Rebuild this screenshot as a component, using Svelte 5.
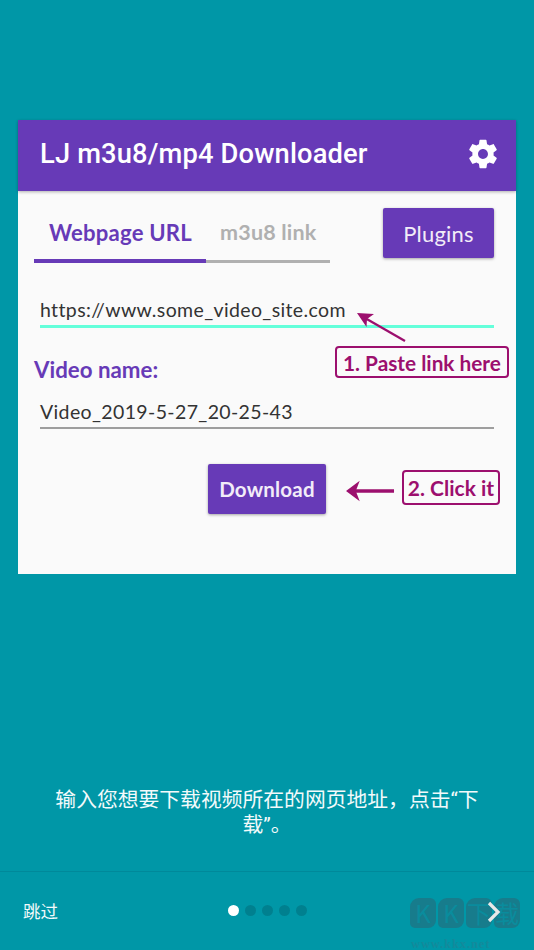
<script>
  const dots = [0, 1, 2, 3, 4];
</script>

<div class="page">
  <div class="shot">
    <header class="bar">
      <h1>LJ m3u8/mp4 Downloader</h1>
      <svg class="gear" viewBox="0 0 24 24" aria-hidden="true"><path d="M19.43 12.98c.04-.32.07-.64.07-.98s-.03-.66-.07-.98l2.11-1.65c.19-.15.24-.42.12-.64l-2-3.46c-.12-.22-.39-.3-.61-.22l-2.49 1c-.52-.4-1.08-.73-1.69-.98l-.38-2.65C14.46 2.18 14.25 2 14 2h-4c-.25 0-.46.18-.49.42l-.38 2.65c-.61.25-1.17.59-1.69.98l-2.49-1c-.23-.09-.49 0-.61.22l-2 3.46c-.13.22-.07.49.12.64l2.11 1.65c-.04.32-.07.65-.07.98s.03.66.07.98l-2.11 1.65c-.19.15-.24.42-.12.64l2 3.46c.12.22.39.3.61.22l2.49-1c.52.4 1.08.73 1.69.98l.38 2.65c.03.24.24.42.49.42h4c.25 0 .46-.18.49-.42l.38-2.65c.61-.25 1.17-.59 1.69-.98l2.49 1c.23.09.49 0 .61-.22l2-3.46c.12-.22.07-.49-.12-.64l-2.11-1.65zM12 15.5c-1.93 0-3.5-1.57-3.5-3.5s1.57-3.5 3.5-3.5 3.500 1.57 3.500 3.500-1.57 3.500-3.500 3.500z"/></svg>
    </header>
    <div class="body">
      <div class="toprow">
        <div class="tabs">
          <div class="tab active">Webpage URL</div>
          <div class="tab">m3u8 link</div>
        </div>
        <button class="plugins">Plugins</button>
      </div>
      <div class="field url">https://www.some_video_site.com</div>
      <div class="namerow">
        <span class="label">Video name:</span>
        <span class="note n1">1. Paste link here</span>
      </div>
      <div class="field name">Video_2019-5-27_20-25-43</div>
      <div class="actions">
        <button class="download">Download</button>
        <svg class="arrow-left" viewBox="0 0 50 24" aria-hidden="true"><path d="M49 12H9" stroke="#9c0f6e" stroke-width="3.800" fill="none"/><path d="M0 12L14 1.500L10 12L14 22.500Z" fill="#9c0f6e"/></svg>
        <span class="note n2">2. Click it</span>
      </div>
      <svg class="arrow-diag" viewBox="0 0 50 30" aria-hidden="true"><path d="M48 28L8 5" stroke="#9c0f6e" stroke-width="2.300" fill="none"/><path d="M0 0L17 1L10 6L9.500 14Z" fill="#9c0f6e"/></svg>
    </div>
  </div>

  <p class="desc">输入您想要下载视频所在的网页地址，点击“下载”。</p>

  <footer class="foot">
    <span class="skip">跳过</span>
    <div class="dots">
      {#each dots as d}
        <span class="dot" class:on={d === 0}></span>
      {/each}
    </div>
    <div class="mark" aria-hidden="true">
      <div class="marks"><span>K</span><span>K</span><span>下</span><span>载</span></div>
      <div class="url-mark">www.kkx.net</div>
    </div>
    <svg class="next" viewBox="0 0 14 22" aria-hidden="true"><path d="M2 2L11 11L2 20" fill="none" stroke="#e8e8e8" stroke-width="3.200"/></svg>
  </footer>
</div>

<style>
  :global(body) { margin: 0; background: #0097a7; }
  .page {
    width: 534px; height: 950px; background: #0097a7; display: flex; flex-direction: column;
    overflow: hidden; font-family: "Lato", "Noto Sans CJK SC", sans-serif;
  }
  .shot {
    margin: 120px 18px 0; height: 454px; background: #fafafa; display: flex; flex-direction: column;
  }
  .bar {
    height: 71px; background: #673ab7; display: flex; align-items: center; justify-content: space-between;
    padding: 0 16px 0 22px; box-shadow: 0 1px 3px rgba(0,0,0,.3); flex: none; position: relative;
  }
  h1 { margin: 0 0 4px; font: 500 27.300px "Roboto", sans-serif; color: #fff; letter-spacing: .15px; }
  .gear { width: 34px; height: 34px; fill: #fff; margin-bottom: 4px; }
  .body { flex: 1; padding: 17px 22px 0 16px; position: relative; }
  .toprow { display: flex; justify-content: space-between; height: 54px; }
  .tabs { display: flex; width: 296px; height: 55px; border-bottom: 3px solid #b0b0b0; box-sizing: border-box; }
  .tab {
    font: 700 21.500px "Lato", sans-serif; color: #b0b0b0; height: 55px; box-sizing: border-box;
    padding-top: 11px; margin-left: 14px; letter-spacing: .2px;
  }
  .tab.active {
    color: #673ab7; width: 172px; margin-left: 0; padding-left: 15px; border-bottom: 4px solid #673ab7; flex: none;
    font-size: 22.100px; padding-top: 11px;
  }
  button {
    border: 0; background: #673ab7; color: #f2ecf8; border-radius: 2px; box-shadow: 0 1px 3px rgba(0,0,0,.35);
    padding: 0; font-family: "Lato", sans-serif;
  }
  .plugins { width: 111px; height: 50px; font-size: 22px; letter-spacing: .2px; }
  .field { margin-left: 6px; font-size: 19.500px; color: #333; box-sizing: border-box; letter-spacing: .37px; }
  .url { margin-top: 26px; height: 40px; padding-top: 10px; border-bottom: 3px solid #64ffda; }
  .namerow { display: flex; justify-content: space-between; align-items: flex-start; margin-top: 18px; margin-right: -15px; height: 31px; }
  .label { font: 700 22.300px "Lato", sans-serif; color: #673ab7; padding-top: 10px; }
  .note {
    border: 2px solid #9c0f6e; border-radius: 4px; color: #9c0f6e; font: 700 20.800px "Lato", sans-serif;
    box-sizing: border-box; display: flex; align-items: center; justify-content: center; background: #fafafa;
  }
  .n1 { width: 174px; height: 32px; }
  .n2 { width: 99px; height: 35px; margin-left: 7px; margin-top: 6px; font-size: 21px; }
  .name { margin-top: 12px; height: 40px; padding-top: 11px; border-bottom: 2px solid #9e9e9e; }
  .actions { display: flex; align-items: flex-start; margin-top: 35px; margin-left: 174px; margin-right: -6px; }
  .download { width: 118px; height: 50px; font-size: 20.500px; font-weight: 700; flex: none; letter-spacing: .2px; }
  .arrow-left { width: 49px; height: 24px; margin: 15px 0 0 20px; flex: none; }
  .arrow-diag { position: absolute; left: 339px; top: 122px; width: 50px; height: 30px; }
  .desc {
    margin: auto 0 0; padding: 0 44px; font: 400 20.800px/25px "Roboto", "Noto Sans CJK SC", sans-serif; color: #f2fafb; text-align: center;
    height: 50px; box-sizing: border-box; word-break: break-all;
  }
  .foot {
    margin-top: 33px; height: 79px; border-top: 1px solid #00899a; position: relative; display: flex; align-items: center;
    flex: none; padding-left: 23px; box-sizing: border-box;
  }
  .skip { font: 400 17.500px "Noto Sans CJK SC", sans-serif; color: #f2fafb; padding-bottom: 1px; }
  .dots { position: absolute; left: 228px; top: 33px; display: flex; gap: 6px; }
  .dot { width: 11px; height: 11px; border-radius: 50%; background: #00808f; }
  .dot.on { background: #fff; }
  .next { position: absolute; left: 487px; top: 29px; width: 14px; height: 22px; }
  .mark { position: absolute; left: 410px; top: 26px; width: 112px; height: 52px; }
  .marks { display: flex; gap: 2px; }
  .marks span {
    width: 26px; height: 30px; background: #177c8c; color: #0a8c9d; font: 400 24px/30px "Noto Sans CJK SC", sans-serif;
    text-align: center; border-radius: 9px 6px 8px 5px;
  }
  .url-mark { font: 700 12.500px "Liberation Serif", serif; color: #138a9b; letter-spacing: .9px; margin: 9px 0 0 1px; }
</style>
